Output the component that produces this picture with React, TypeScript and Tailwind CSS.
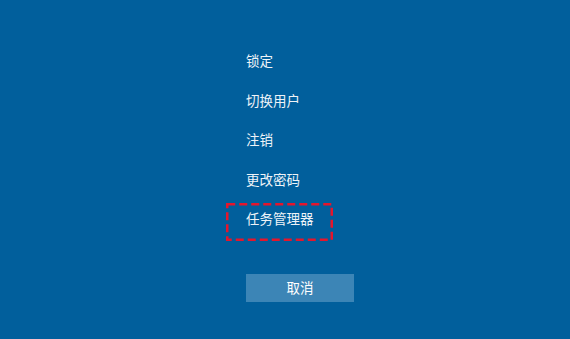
import React from 'react'

const options = ['锁定', '切换用户', '注销', '更改密码', '任务管理器']

export default function App() {
  return (
    <div
      className="w-full h-screen bg-[#015f9c] text-[#eef3f8] overflow-hidden"
      style={{ fontFamily: '"Noto Sans CJK SC", "Noto Sans", sans-serif' }}
    >
      <div className="pl-[246px] pt-[41px] flex flex-col items-start">
        {options.map((label, i) => (
          <div key={label} className="relative h-[39.5px] flex items-center text-[13.5px] leading-none">
            {label}
            {i === options.length - 1 && (
              // highlight box drawn over the last option
              <svg className="absolute left-[-20px] top-[3.5px] w-[107px] h-[38px] overflow-visible" viewBox="0 0 107 38">
                <rect x="1.25" y="1.25" width="104.5" height="35.5" fill="none" stroke="#e5162c" strokeWidth="2.5" strokeDasharray="8 4" />
              </svg>
            )}
          </div>
        ))}
        <button className="mt-[35px] w-[108px] h-[28.5px] bg-[#3c85b6] text-[13.5px] text-white leading-none flex items-center justify-center">
          取消
        </button>
      </div>
    </div>
  )
}
